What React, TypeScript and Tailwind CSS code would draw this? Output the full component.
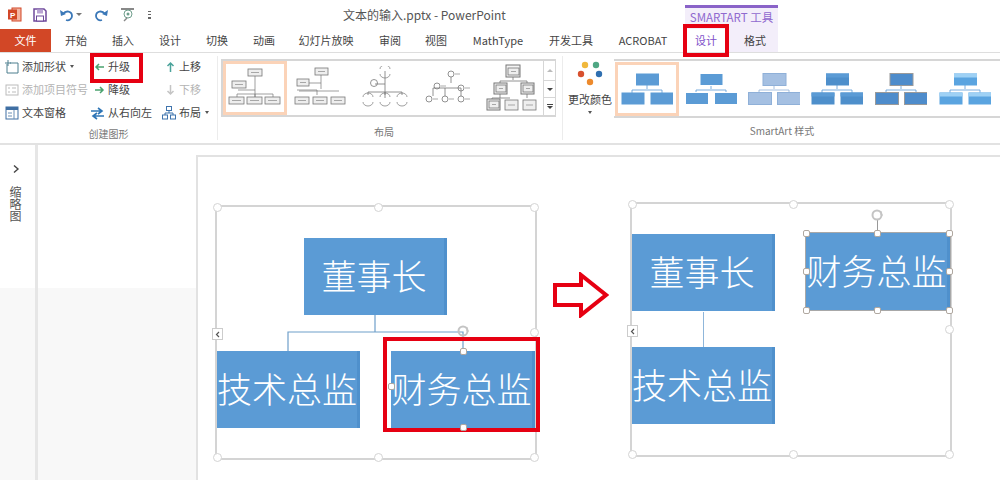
import React from "react";

const FONT = "font-['Noto_Sans_CJK_SC','Liberation_Sans',sans-serif]";

function Tab({ w, children, cls = "text-[#444]" }: { w: string; children: React.ReactNode; cls?: string }) {
  return <div className={`${w} ${cls} text-center text-[11px] leading-[23px] whitespace-nowrap`}>{children}</div>;
}

function Cmd({ icon, label, gray = false, caret = false }: { icon: React.ReactNode; label: string; gray?: boolean; caret?: boolean }) {
  return (
    <div className={`flex items-center h-[23px] text-[11px] whitespace-nowrap ${gray ? "text-[#b4b4b4]" : "text-[#444]"}`}>
      {icon}
      <span>{label}</span>
      {caret && <span className="ml-[4px] border-x-[2px] border-t-[3px] border-x-transparent border-t-[#555] w-0 h-0" />}
    </div>
  );
}

function Ico({ w = 14, children }: { w?: number; children: React.ReactNode }) {
  return (
    <svg width={w} height={14} viewBox={`0 0 ${w} 14`} fill="none" className="shrink-0 mr-[3px]">
      {children}
    </svg>
  );
}

const ArrowL = ({ c }: { c: string }) => <Ico w={11}><path d="M10 7H2M5 4 2 7l3 3" stroke={c} strokeWidth="1.5" /></Ico>;
const ArrowR = ({ c }: { c: string }) => <Ico w={11}><path d="M1 7h8M6 4l3 3-3 3" stroke={c} strokeWidth="1.5" /></Ico>;
const ArrowU = ({ c }: { c: string }) => <Ico w={11}><path d="M5.5 12V3M2.5 6l3-3 3 3" stroke={c} strokeWidth="1.5" /></Ico>;
const ArrowD = ({ c }: { c: string }) => <Ico w={11}><path d="M5.5 2v9M2.5 8l3 3 3-3" stroke={c} strokeWidth="1.5" /></Ico>;

function B({ x, y, w = 12, h = 7 }: { x: number; y: number; w?: number; h?: number }) {
  return (
    <g>
      <rect x={x} y={y} width={w} height={h} fill="#eee" stroke="#777" strokeWidth="0.8" />
      <path d={`M${x + 3} ${y + h / 2}h${w - 6}`} stroke="#888" strokeWidth="0.7" />
    </g>
  );
}

function Layout1() {
  return (
    <svg width="54" height="44" viewBox="0 0 54 44">
      <path d="M27 10v24M10 24h17M9 28h36M9 28v3M27 28v3M45 28v3" stroke="#777" strokeWidth="0.7" fill="none" />
      <B x={20} y={3} w={14} />
      <B x={4} y={15} w={14} />
      <B x={1} y={31} w={15} />
      <B x={19} y={31} w={15} />
      <B x={37} y={31} w={15} />
    </svg>
  );
}
function Layout2() {
  return (
    <svg width="58" height="44" viewBox="0 0 58 44">
      <path d="M30 9v14M12 17h18M8 25h40" stroke="#777" strokeWidth="0.7" fill="none" />
      <B x={24} y={2} w={13} />
      <B x={6} y={13} w={12} />
      <path d="M6 24h20v5" stroke="#777" strokeWidth="0.7" fill="none" />
      <B x={4} y={31} w={14} />
      <B x={22} y={31} w={14} />
      <B x={40} y={31} w={14} />
    </svg>
  );
}
function Layout3() {
  const c = (x: number, y: number) => (
    <g key={`${x}-${y}`}>
      <path d={`M${x - 5} ${y}a5 4 0 0 1 10 0`} fill="none" stroke="#777" strokeWidth="0.7" />
      <path d={`M${x - 5} ${y + 5}a5 4 0 0 0 10 0`} fill="none" stroke="#777" strokeWidth="0.7" />
    </g>
  );
  return (
    <svg width="50" height="44" viewBox="0 0 50 44">
      <path d="M25 5v27M8 26h34M8 26v3M25 26v3M42 26v3M15 18h10" stroke="#777" strokeWidth="0.8" fill="none" />
      {c(25, 3)}
      <circle cx="14" cy="17" r="3.5" fill="none" stroke="#777" strokeWidth="0.8" />
      {c(8, 31)}
      {c(25, 31)}
      {c(42, 31)}
    </svg>
  );
}
function Layout4() {
  const r = (x: number, y: number) => (
    <g key={`${x}-${y}`}>
      <circle cx={x} cy={y} r="3" fill="none" stroke="#777" strokeWidth="0.8" />
      <path d={`M${x + 4} ${y}h5`} stroke="#888" strokeWidth="0.7" />
    </g>
  );
  return (
    <svg width="50" height="44" viewBox="0 0 50 44">
      <path d="M26 11v6M8 30v-8h28v8M20 22v8" stroke="#777" strokeWidth="0.8" fill="none" />
      {r(26, 8)}
      {r(12, 20)}
      {r(36, 22)}
      {r(4, 33)}
      {r(20, 33)}
      {r(36, 33)}
    </svg>
  );
}
function Layout5() {
  return (
    <svg width="54" height="48" viewBox="0 0 54 48">
      <path d="M27 12v4M14 17h27v3M14 17v3M14 30v4M41 30v4M6 34h18M6 34v2" stroke="#777" strokeWidth="0.8" fill="none" />
      <rect x="20" y="1" width="14" height="12" fill="#f4f4f4" stroke="#777" />
      <B x={22} y={4} w={11} h={7} />
      <rect x="8" y="19" width="13" height="11" fill="#f4f4f4" stroke="#777" />
      <B x={10} y={21} w={10} h={7} />
      <rect x="35" y="19" width="13" height="11" fill="#f4f4f4" stroke="#777" />
      <B x={37} y={21} w={10} h={7} />
      <rect x="1" y="35" width="13" height="11" fill="#f4f4f4" stroke="#777" />
      <B x={3} y={37} w={10} h={7} />
      <B x={19} y={36} w={13} h={10} />
      <B x={37} y={36} w={13} h={10} />
    </svg>
  );
}

function StyleThumb({ fill, top, stroke, line = "#5b9bd5" }: { fill: string; top?: string; stroke?: string; line?: string }) {
  return (
    <svg width="52" height="32" viewBox="0 0 52 32">
      <path d="M26 12v4M11 20v-3h30v3" stroke={line} strokeWidth="0.8" fill="none" />
      <rect x="15" y="0.5" width="23" height="12" fill={fill} stroke={stroke} />
      <rect x="0.5" y="19.5" width="23" height="12" fill={fill} stroke={stroke} />
      <rect x="29.5" y="19.5" width="23" height="12" fill={fill} stroke={stroke} />
      {top && (
        <g fill={top}>
          <rect x="15" y="0.5" width="23" height="4" />
          <rect x="0.5" y="19.5" width="23" height="4" />
          <rect x="29.5" y="19.5" width="23" height="4" />
        </g>
      )}
    </svg>
  );
}

function OrgBox({ cls, children }: { cls: string; children: string }) {
  return (
    <div className={`absolute ${cls} h-[77px] pb-[3px] bg-[#5b9bd5] border-r-[3px] border-r-[#4f90cc] flex items-center justify-center text-white text-[35px] font-light whitespace-nowrap`}>
      {children}
    </div>
  );
}

function H({ cls }: { cls: string }) {
  return <div className={`absolute ${cls} w-[9px] h-[9px] rounded-full bg-white border border-[#d4d4d4]`} />;
}
function S({ cls }: { cls: string }) {
  return <div className={`absolute ${cls} w-[7px] h-[7px] rounded-[2px] bg-white border border-[#b0a8a0]`} />;
}

function FrameHandles() {
  return (
    <>
      <H cls="-left-[4px] -top-[4px]" />
      <H cls="left-[157px] -top-[4px]" />
      <H cls="-right-[4px] -top-[4px]" />
      <H cls="-left-[4px] -bottom-[4px]" />
      <H cls="left-[157px] -bottom-[4px]" />
      <H cls="-right-[4px] -bottom-[4px]" />
      <H cls="-right-[4px] top-[121px]" />
      <div className="absolute -left-[5px] top-[121px] w-[11px] h-[12px] bg-white border border-[#ccc] flex items-center justify-center">
        <svg width="5" height="7" viewBox="0 0 5 7"><path d="M4 1 1.5 3.5 4 6" stroke="#555" strokeWidth="1.2" fill="none" /></svg>
      </div>
    </>
  );
}

function Rot({ cls }: { cls: string }) {
  return (
    <svg className={`absolute ${cls}`} width="16" height="16" viewBox="0 0 16 16" fill="none">
      <circle cx="8" cy="8" r="4.5" stroke="#c4c4c4" strokeWidth="2" />
      <path d="M12 4v4h2" stroke="#c4c4c4" strokeWidth="1" />
    </svg>
  );
}

export default function App() {
  return (
    <div className={`w-[1000px] h-[480px] overflow-hidden bg-white flex flex-col ${FONT}`}>
      {/* title bar */}
      <div className="relative h-[29px] flex items-center shrink-0">
        <div className="flex items-center pl-[8px]">
          <svg width="14" height="15" viewBox="0 0 14 15" className="mr-[11px]">
            <rect x="4" y="1" width="9" height="13" fill="#f3b6a3" stroke="#d24726" />
            <rect x="0" y="2.5" width="9" height="10" fill="#d24726" />
            <text x="2" y="10.5" fontSize="8" fill="#fff" fontFamily="Liberation Sans" fontWeight="700">P</text>
          </svg>
          <svg width="14" height="14" viewBox="0 0 14 14" className="mr-[12px]" fill="none">
            <path d="M1 1h10l2 2v10H1z" stroke="#6f4a9c" strokeWidth="1.5" />
            <rect x="4" y="1.5" width="6" height="4" fill="#b9a3d3" />
            <rect x="3.5" y="8" width="7" height="5" fill="#fff" stroke="#6f4a9c" />
          </svg>
          <svg width="15" height="14" viewBox="0 0 15 14" className="mr-[2px]" fill="none">
            <path d="M4 6c3-4 9-3 9 2 0 3-3 5-6 4" stroke="#3b78b8" strokeWidth="1.8" />
            <path d="M1 2l1 6 5-2z" fill="#3b78b8" />
          </svg>
          <span className="w-0 h-0 border-x-[3px] border-t-[3px] border-x-transparent border-t-[#777] mr-[12px]" />
          <svg width="15" height="14" viewBox="0 0 15 14" className="mr-[11px]" fill="none">
            <path d="M11 6C8 2 2 3 2 8c0 3 3 5 6 4" stroke="#3b78b8" strokeWidth="1.8" />
            <path d="M14 2l-1 6-5-2z" fill="#3b78b8" />
          </svg>
          <svg width="16" height="15" viewBox="0 0 16 15" className="mr-[12px]" fill="none">
            <rect x="1" y="1" width="13" height="2" fill="#888" />
            <circle cx="8" cy="7" r="4" stroke="#6f9e8c" />
            <circle cx="8" cy="7" r="1.5" fill="#6f9e8c" />
            <path d="M7 11 4 14" stroke="#888" strokeWidth="1.5" />
          </svg>
          <div className="flex flex-col gap-[2px]">
            <span className="w-[3px] h-[1px] bg-[#666]" />
            <span className="w-[3px] h-[1px] bg-[#666]" />
            <span className="w-[3px] h-[2px] bg-[#666]" />
          </div>
        </div>
        <div className="ml-[192px] text-[12px] text-[#555] whitespace-nowrap">文本的输入.pptx - PowerPoint</div>
        <div className="absolute left-[685px] top-[5px] w-[93px] h-[24px] bg-[#f3eefa] border-t-[3px] border-t-[#8a63c8] text-center text-[11.5px] leading-[19px] text-[#9069cf] whitespace-nowrap">
          SMARTART 工具
        </div>
      </div>

      {/* tabs */}
      <div className="relative h-[24px] flex shrink-0 border-b border-b-[#dedede]">
        <div className="w-[51px] mr-[1px] h-[23px] bg-[#d24726] text-white text-center text-[11px] leading-[23px]">文件</div>
        <Tab w="w-[48px]">开始</Tab>
        <Tab w="w-[46px]">插入</Tab>
        <Tab w="w-[48px]">设计</Tab>
        <Tab w="w-[46px]">切换</Tab>
        <Tab w="w-[48px]">动画</Tab>
        <Tab w="w-[76px]">幻灯片放映</Tab>
        <Tab w="w-[52px]">审阅</Tab>
        <Tab w="w-[40px]">视图</Tab>
        <Tab w="w-[84px]">MathType</Tab>
        <Tab w="w-[62px]">开发工具</Tab>
        <Tab w="w-[82px]">ACROBAT</Tab>
        <Tab w="w-[44px]" cls="text-[#7f4fc9] bg-white">设计</Tab>
        <Tab w="w-[50px]" cls="bg-[#f3eefa] text-[#444] pl-[4px]">格式</Tab>
        <div className="absolute left-[683px] -top-[5px] w-[46px] h-[33px] border-[4px] border-[#e60012]" />
      </div>

      {/* ribbon */}
      <div className="relative h-[92px] flex shrink-0 border-b-2 border-b-[#e2e2e2]">
        <div className="w-[218px] flex flex-col border-r border-r-[#ececec] my-[3px]">
          <div className="flex h-[71px] -mt-[1px] mb-[2px]">
            <div className="w-[94px] pl-[5px] flex flex-col">
              <Cmd label="添加形状" caret icon={<Ico><path d="M2 4v9h11V3H5M3 0v6M0 3h6" stroke="#4d7f8e" strokeWidth="1" /></Ico>} />
              <Cmd label="添加项目符号" gray icon={<Ico><rect x="1" y="2" width="12" height="10" stroke="#bbb" /><path d="M3 5h2M3 9h2M7 5h4M7 9h4" stroke="#bbb" /></Ico>} />
              <Cmd label="文本窗格" icon={<Ico><rect x="1" y="1" width="12" height="12" stroke="#3f6fa3" /><rect x="1" y="1" width="12" height="3" fill="#3f6fa3" /><path d="M9 4v9M3 7h4M3 10h4" stroke="#6b8fb5" /></Ico>} />
            </div>
            <div className="w-[68px] flex flex-col">
              <Cmd label="升级" icon={<ArrowL c="#4ba36f" />} />
              <Cmd label="降级" icon={<ArrowR c="#4ba36f" />} />
              <div className="-ml-[4px]">
                <Cmd label="从右向左" icon={<Ico w={15}><path d="M1 5h10M8 2l4 3-4 3" stroke="#2e75b6" strokeWidth="1.6" /><path d="M14 10H4M7 7l-4 3 4 3" stroke="#2e75b6" strokeWidth="1.6" /></Ico>} />
              </div>
            </div>
            <div className="flex-1 pl-[1px] flex flex-col">
              <div className="pl-[2px]"><Cmd label="上移" icon={<ArrowU c="#4ba39b" />} /></div>
              <div className="pl-[2px]"><Cmd label="下移" gray icon={<ArrowD c="#c4c4c4" />} /></div>
              <div className="-ml-[1px]">
                <Cmd label="布局" caret icon={<Ico><rect x="4.5" y="0.5" width="5" height="4" stroke="#3f74ad" /><rect x="0.5" y="9" width="5" height="4" stroke="#3f74ad" /><rect x="8.5" y="9" width="5" height="4" stroke="#3f74ad" /><path d="M7 4.5V7M3 9V7h8v2" stroke="#3f74ad" /></Ico>} />
              </div>
            </div>
          </div>
          <div className="text-center text-[10px] leading-[14px] text-[#777] pt-[1px]">创建图形</div>
        </div>

        <div className="w-[345px] flex flex-col border-r border-r-[#ececec] my-[3px]">
          <div className="ml-[3px] mr-[6px] mt-[3px] h-[58px] border-2 border-[#d6d6d6] border-r-0 flex">
            <div className="w-[64px] h-[54px] border-[3px] border-[#fbd3b8] flex items-center justify-center shrink-0"><Layout1 /></div>
            <div className="w-[65px] flex items-center justify-center"><Layout2 /></div>
            <div className="w-[65px] flex items-center justify-center"><Layout3 /></div>
            <div className="w-[65px] flex items-center justify-center"><Layout4 /></div>
            <div className="w-[61px] flex items-center justify-center"><Layout5 /></div>
            <div className="flex-1 flex flex-col border-x border-[#d6d6d6] text-[#666]">
              <div className="h-[20px] border-b border-[#d6d6d6] flex items-center justify-center"><span className="w-0 h-0 border-x-[3px] border-b-[3px] border-x-transparent border-b-[#bbb]" /></div>
              <div className="h-[17px] border-b border-[#d6d6d6] flex items-center justify-center"><span className="w-0 h-0 border-x-[3px] border-t-[3px] border-x-transparent border-t-[#444]" /></div>
              <div className="flex-1 flex flex-col items-center justify-center gap-[1px]"><span className="w-[6px] h-[1px] bg-[#444]" /><span className="w-0 h-0 border-x-[3px] border-t-[3px] border-x-transparent border-t-[#444]" /></div>
            </div>
          </div>
          <div className="mt-[8px] text-center text-[10px] leading-[14px] text-[#777] pr-[12px]">布局</div>
        </div>

        <div className="flex-1 flex flex-col my-[3px] min-w-0">
          <div className="flex h-[59px] mt-[3px]">
            <div className="w-[51px] flex flex-col items-center shrink-0 pl-[3px]">
              <svg width="28" height="28" viewBox="0 0 28 28" className="mt-[1px]">
                <circle cx="9" cy="5" r="3.2" fill="#f0b83c" />
                <circle cx="20" cy="5" r="3.2" fill="#4fa783" />
                <circle cx="5" cy="14" r="3.2" fill="#d8502e" />
                <circle cx="23" cy="14" r="3.2" fill="#2f6fb0" />
                <circle cx="14" cy="22" r="3.2" fill="#ed8a2c" />
              </svg>
              <div className="text-[11px] leading-[14px] text-[#444] whitespace-nowrap mt-[4px]">更改颜色</div>
              <span className="mt-[5px] w-0 h-0 border-x-[2px] border-t-[3px] border-x-transparent border-t-[#555]" />
            </div>
            <div className="flex-1 border-y-2 border-y-[#d6d6d6] flex items-center">
              <div className="w-[64px] h-[54px] border-[3px] border-[#fbd3b8] flex items-center justify-center shrink-0 ml-[1px]"><StyleThumb fill="#5b9bd5" /></div>
              <div className="w-[63px] flex justify-center"><StyleThumb fill="#5b9bd5" stroke="#fff" /></div>
              <div className="w-[63px] flex justify-center"><StyleThumb fill="#a5c0e2" stroke="#8fb0d8" line="#8fb0d8" /></div>
              <div className="w-[64px] flex justify-center"><StyleThumb fill="#4e8fcb" top="#5b9bd5" /></div>
              <div className="w-[64px] flex justify-center"><StyleThumb fill="#4e8ccb" stroke="#9a9a9a" /></div>
              <div className="w-[63px] flex justify-center"><StyleThumb fill="#5aa4e0" top="#9ed1f5" /></div>
            </div>
          </div>
          <div className="mt-[6px] text-center text-[10px] leading-[14px] text-[#777] pl-[1px]">SmartArt 样式</div>
        </div>

        <div className="absolute left-[90px] top-0 w-[53px] h-[30px] border-[4px] border-[#e60012]" />
      </div>

      {/* work area */}
      <div className="flex-1 flex min-h-0">
        <div className="w-[35px] shrink-0 flex flex-col items-center pr-[4px] bg-[linear-gradient(to_bottom,#fff_143px,#f8f8f8_143px)]">
          <svg width="8" height="10" viewBox="0 0 8 10" className="mt-[19px]"><path d="M2 1.5 6 5 2 8.5" stroke="#444" strokeWidth="1.4" fill="none" /></svg>
          <div className="mt-[12px] text-[12px] leading-[12px] text-[#555] w-[12px] [word-break:break-all]">缩略图</div>
        </div>
        <div className="w-[3px] shrink-0 bg-[#e6e6e6]" />
        <div className="w-[158px] shrink-0 bg-[linear-gradient(to_bottom,#fff_143px,#f8f8f8_143px)]" />
        <div className="flex-1 mt-[10px] relative bg-white border-l-2 border-t-2 border-[#e2e2e2]">
          {/* left diagram */}
          <div className="absolute left-[17px] top-[48px] w-[322px] h-[255px] border-2 border-[#d4d4d4]">
            <FrameHandles />
            <svg className="absolute left-0 top-0" width="322" height="160" fill="none">
              <path d="M158 108v17M71 144v-19h175v19" stroke="#6f9fca" strokeWidth="1.2" />
            </svg>
            <OrgBox cls="left-[87px] top-[31px] w-[143px]">董事长</OrgBox>
            <OrgBox cls="left-0 top-[144px] w-[143px]">技术总监</OrgBox>
            <OrgBox cls="left-[174px] top-[144px] w-[144px]">财务总监</OrgBox>
            <Rot cls="left-[238px] top-[116px]" />
            <div className="absolute left-[166px] top-[130px] w-[157px] h-[95px] border-[4px] border-[#e60012]" />
            <S cls="left-[243px] top-[141px]" />
            <S cls="left-[243px] top-[217px]" />
            <S cls="left-[171px] top-[176px]" />
          </div>

          {/* arrow */}
          <svg className="absolute left-[355px] top-[115px]" width="56" height="46" viewBox="0 0 56 46" fill="none">
            <path d="M2 13h26V3l25 20-25 20V33H2z" stroke="#e60012" strokeWidth="4" />
          </svg>

          {/* right diagram */}
          <div className="absolute left-[432px] top-[45px] w-[322px] h-[255px] border-2 border-[#d4d4d4]">
            <FrameHandles />
            <div className="absolute left-[71px] top-[108px] w-[1px] h-[35px] bg-[#8fb6da]" />
            <OrgBox cls="left-0 top-[30px] w-[143px]">董事长</OrgBox>
            <OrgBox cls="left-0 top-[143px] w-[143px]">技术总监</OrgBox>
            <OrgBox cls="left-[174px] top-[29px] w-[144px] outline outline-1 outline-[#a8a8a8]">财务总监</OrgBox>
            <div className="absolute left-[245px] top-[16px] w-[1px] h-[13px] bg-[#999]" />
            <Rot cls="left-[237px] top-[3px]" />
            <S cls="left-[171px] top-[26px]" />
            <S cls="left-[242px] top-[26px]" />
            <S cls="left-[314px] top-[26px]" />
            <S cls="left-[171px] top-[64px]" />
            <S cls="left-[314px] top-[64px]" />
            <S cls="left-[171px] top-[103px]" />
            <S cls="left-[242px] top-[103px]" />
            <S cls="left-[314px] top-[103px]" />
          </div>
        </div>
      </div>
    </div>
  );
}
